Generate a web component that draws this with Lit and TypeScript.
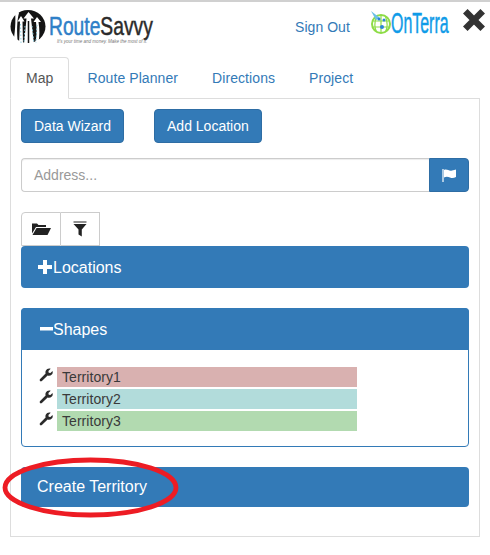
import { LitElement, html, css } from "lit";
import { customElement } from "lit/decorators.js";

const wrench = html`<svg class="wrench" viewBox="0 0 14 14"><path d="M1.2 12.9 0.6 12.3 0.9 11.2 6.6 5.6C6.1 3.8 6.7 2 8.2 1 9.3.4 10.6.3 11.7.8L9.4 3 9.7 4.8 11.4 5.1 13.5 2.9C14 4.2 13.7 5.6 12.8 6.6 11.7 7.7 10.1 8.1 8.6 7.6L2.9 13.1 1.8 13.4Z" fill="#2b2b2b"/></svg>`;

@customElement("app-root")
export class AppRoot extends LitElement {
  static styles = css`
    :host { display: block; width: 490px; height: 555px; background: #fff; font-family: "Liberation Sans", Arial, sans-serif; font-size: 14px; color: #333; overflow: hidden; position: relative; box-sizing: border-box; border-top: 2px solid #d0d0d0; }
    * { box-sizing: border-box; }
    .header { height: 55px; display: flex; position: relative; }
    .logo { margin: 8px 0 0 10px; width: 146px; height: 36px; display: flex; position: relative; }
    .logo svg { width: 36px; height: 34px; flex: none; }
    .brand { margin: 3px 0 0 3px; font-size: 25px; line-height: 26px; transform: scaleX(.77); transform-origin: 0 0; white-space: nowrap; }
    .brand b { font-weight: 400; color: #2f80c8; -webkit-text-stroke: .5px #2f80c8; }
    .brand i { font-style: normal; color: #2b2b2b; -webkit-text-stroke: .5px #2b2b2b; }
    .tag { position: absolute; left: 47px; top: 29px; font-size: 4.5px; line-height: 6px; color: #777; font-style: italic; white-space: nowrap; }
    .signout { margin: 15px 0 0 139px; line-height: 20px; color: #337ab7; width: 55px; white-space: nowrap; letter-spacing: .05px; }
    .onterra { margin: 8px 0 0 20px; width: 81px; display: flex; }
    .onterra svg { width: 21px; height: 24px; flex: none; }
    .onterra span { font-size: 29px; line-height: 26px; color: #0f9be8; transform: scaleX(.55); transform-origin: 0 0; white-space: nowrap; -webkit-text-stroke: .5px #0f9be8; }
    .close { margin: 7px 0 0 12px; width: 22px; height: 22px; }
    .tabs { display: flex; padding-left: 10px; height: 42px; position: relative; }
    .tab { padding: 0 15px; margin-right: 2px; border: 1px solid transparent; line-height: 40px; height: 42px; color: #337ab7; white-space: nowrap; letter-spacing: .08px; }
    .tab.active { color: #555; background: #fff; border-color: #ddd; border-bottom-color: #fff; border-radius: 4px 4px 0 0; position: relative; z-index: 1; }
    .content { margin: -1px 0 0 10px; width: 470px; height: 439px; border: 1px solid #ddd; padding: 10px; }
    .actions { display: flex; gap: 30px; }
    .btn { height: 34px; padding: 0 12px; background: #337ab7; border: 1px solid #2e6da4; border-radius: 4px; color: #fff; line-height: 32px; white-space: nowrap; }
    .input-row { display: flex; margin-top: 15px; height: 34px; }
    .input { flex: 1; border: 1px solid #ccc; border-right: 0; border-radius: 4px 0 0 4px; padding: 0 12px; line-height: 32px; color: #999; box-shadow: inset 0 1px 1px rgba(0,0,0,.075); }
    .addon { width: 40px; background: #337ab7; border: 1px solid #2e6da4; border-radius: 0 4px 4px 0; display: flex; align-items: center; justify-content: center; }
    .addon svg { width: 15px; height: 14px; margin-top: -1px; }
    .group { display: flex; margin-top: 20px; height: 34px; width: 79px; }
    .gbtn { flex: 1; border: 1px solid #ccc; display: flex; align-items: center; justify-content: center; background: #fff; }
    .gbtn:first-child { border-radius: 4px 0 0 0; }
    .gbtn + .gbtn { border-left: 0; }
    .gbtn svg { width: 20px; height: 16px; }
    .panel { background: #337ab7; border-radius: 4px; height: 42px; color: #fff; font-size: 16px; padding-left: 16px; display: flex; align-items: center; }
    .panel span { padding-top: 2px; }
    .panel svg { width: 16px; height: 16px; flex: none; }
    .shapes { margin-top: 20px; border: 1px solid #337ab7; border-radius: 4px; height: 139px; }
    .shapes .panel { margin: -1px -1px 0; border-radius: 4px 4px 0 0; padding-left: 18px; }
    .shapes .panel svg { width: 14px; }
    .rows { padding: 17px 0 0 17px; display: grid; gap: 2px; }
    .row { display: flex; height: 20px; }
    .wrench { width: 14px; height: 14px; margin: 1px 4px 0 0; flex: none; }
    .row span { width: 300px; padding-left: 5px; line-height: 21px; color: #3a3a3a; letter-spacing: .05px; }
    .create { margin-top: 20px; height: 40px; padding-left: 16px; }
    .create span { padding-top: 0; }
    .ring { position: absolute; left: 2px; top: 455px; width: 178px; height: 62px; pointer-events: none; z-index: 2; }
  `;

  render() {
    return html`
      <div class="header">
        <div class="logo">
          <svg viewBox="0 0 36 34">
            <ellipse cx="18" cy="16.500" rx="17.500" ry="16.500" fill="#141414"/>
            <path d="M7 0 9 3C7 10 6.500 22 8 34H3C5 24 6 10 5 3Z" fill="#fff"/>
            <path d="M18.500 2 13.500 8.500H16.500L14 34H24L21 8.500H24Z" fill="#fff"/>
            <path d="M11 6 7.500 11.500H10L9 34H13L12.500 11.500H14.500Z" fill="#fff"/>
            <path d="M27 7 23.500 12H26C27 19 27 26 25 34H28C30 26 29.500 19 28.500 12H31Z" fill="#fff"/>
            <path d="M18.500 11V33" stroke="#141414" stroke-width="1.500"/>
            <path d="M10.500 14 11 33M15 16 14 33M22 16 24 33M27 15 26 33" stroke="#8fcfe0" stroke-width="1" stroke-dasharray="1.500 2" fill="none"/>
          </svg>
          <div class="brand"><b>Route</b><i>Savvy</i></div>
          <div class="tag">It's your time and money. Make the most of it.</div>
        </div>
        <div class="signout">Sign Out</div>
        <div class="onterra">
          <svg viewBox="0 0 21 24">
            <circle cx="11" cy="14" r="9" fill="#fff" stroke="#8ddc46" stroke-width="2"/>
            <path d="M2.500 11H19.500M2.500 17H19.500M11 5V23M6.500 6.500C4.500 12 4.500 18 6.500 22M15.500 6.500C17.500 12 17.500 18 15.500 22" stroke="#8ddc46" stroke-width="1.200" fill="none"/>
            <path d="M1 1 10 8 6 10Z" fill="#6cc0e8"/>
            <circle cx="9" cy="9" r="1.500" fill="#2a85d8"/><circle cx="14" cy="10" r="1.500" fill="#2a85d8"/><circle cx="12" cy="17" r="2" fill="#2a85d8"/>
          </svg>
          <span>OnTerra</span>
        </div>
        <svg class="close" viewBox="0 0 22 22"><path d="M4 4 18 18M18 4 4 18" stroke="#333" stroke-width="7" stroke-linecap="square" transform="translate(11 11) scale(.92) translate(-11 -11)"/></svg>
      </div>
      <div class="tabs">
        <div class="tab active">Map</div>
        <div class="tab">Route Planner</div>
        <div class="tab">Directions</div>
        <div class="tab">Project</div>
      </div>
      <div class="content">
        <div class="actions"><div class="btn">Data Wizard</div><div class="btn">Add Location</div></div>
        <div class="input-row">
          <div class="input">Address...</div>
          <div class="addon"><svg viewBox="0 0 15 14"><path d="M1 1V14" stroke="#fff" stroke-width="1.200"/><path d="M2 2C5 .5 7 3.500 10 2.500 11.500 2.200 13 2 14 1.500V9C12 10 10 10.500 8 9.500 6 8.700 4 8.500 2 9.500Z" fill="#fff"/></svg></div>
        </div>
        <div class="group">
          <div class="gbtn"><svg viewBox="0 0 20 16"><path d="M1 2.500H6L7.500 4H15V6H5L1 12.500Z" fill="#222"/><path d="M5.500 7H20L16.500 14H1.500Z" fill="#222"/></svg></div>
          <div class="gbtn"><svg viewBox="0 0 20 16"><path d="M3.500 .5H16.500V1.500H3.500Z" fill="#222"/><path d="M3.500 3H16.500L11.800 8.500V15.500L8.500 13.500V8.500Z" fill="#222"/></svg></div>
        </div>
        <div class="panel"><svg viewBox="0 0 16 16"><path d="M6 1H10V6H15V10H10V15H6V10H1V6H6Z" fill="#fff"/></svg><span>Locations</span></div>
        <div class="shapes">
          <div class="panel"><svg viewBox="0 0 14 16"><path d="M1 6H14V9.500H1Z" fill="#fff"/></svg><span>Shapes</span></div>
          <div class="rows">
            ${[["Territory1", "#d9b1b0"], ["Territory2", "#b2dcdb"], ["Territory3", "#b2dab0"]].map(
              ([t, c]) => html`<div class="row">${wrench}<span style="background:${c}">${t}</span></div>`
            )}
          </div>
        </div>
        <div class="panel create"><span>Create Territory</span></div>
      </div>
      <svg class="ring" viewBox="0 0 178 62"><ellipse cx="88.500" cy="30.500" rx="85.500" ry="27.500" fill="none" stroke="#ed1c24" stroke-width="4.800"/></svg>
    `;
  }
}
